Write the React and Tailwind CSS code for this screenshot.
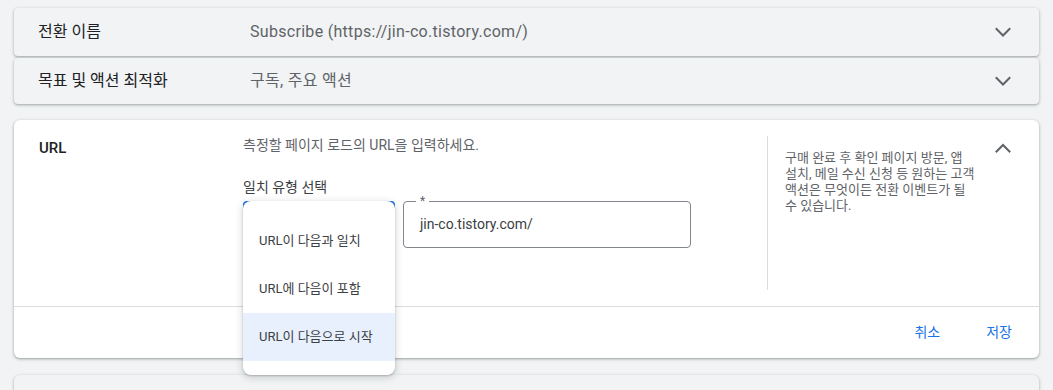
import React from 'react'

const font = { fontFamily: 'Roboto, "Noto Sans CJK KR", sans-serif' }

function Chevron({ up = false }) {
  return (
    <svg width="24" height="24" viewBox="0 0 24 24" fill="none" className="text-[#5f6368]">
      <path
        d={up ? 'M5.5 15.5 12 9l6.5 6.5' : 'M5.5 9 12 15.5 18.5 9'}
        stroke="currentColor"
        strokeWidth="2"
        strokeLinecap="square"
      />
    </svg>
  )
}

function SummaryRow({ label, value, className = '' }) {
  return (
    <div className={`flex items-center bg-[#f1f3f4] rounded-[4px] shadow-[0_1px_2px_rgba(60,64,67,0.3),0_1px_3px_1px_rgba(60,64,67,0.12)] ${className}`}>
      <div className="w-[236px] pl-6 text-[16px] text-[#202124]">{label}</div>
      <div className="flex-1 text-[16px] tracking-[0.3px] text-[#5f6368]">{value}</div>
      <div className="pr-6">
        <Chevron />
      </div>
    </div>
  )
}

const options = ['URL이 다음과 일치', 'URL에 다음이 포함', 'URL이 다음으로 시작']

export default function App() {
  const [selected] = React.useState(2)

  return (
    <div className="h-[390px] overflow-hidden bg-[#f1f3f4] px-[14px] pt-2" style={font}>
      <SummaryRow label="전환 이름" value="Subscribe (https://jin-co.tistory.com/)" className="h-12" />
      <SummaryRow label="목표 및 액션 최적화" value="구독, 주요 액션" className="h-[46px] mt-[2px]" />

      <div className="mt-4 bg-white rounded-[6px] shadow-[0_1px_2px_rgba(60,64,67,0.3),0_1px_3px_1px_rgba(60,64,67,0.15)]">
        <div className="flex h-[186px] py-4">
          <div className="w-[229px] pl-[25px] pt-[3px] text-[15px] font-medium text-[#202124] leading-[18px]">URL</div>

          <div className="flex-1 text-[14px] text-[#5f6368]">
            <p className="leading-[18px]">측정할 페이지 로드의 URL을 입력하세요.</p>
            <p className="mt-[24px] leading-[18px] text-[#3c4043]">일치 유형 선택</p>
            <div className="mt-[5px] flex gap-2">
              <div className="relative">
                <div className="w-[152px] h-[47px] rounded-[4px] border-2 border-[#1a73e8]" />
                <div className="absolute left-0 top-0 z-10 w-[152px] bg-white rounded-[8px] pt-[16px] pb-[14px] shadow-[0_2px_6px_2px_rgba(60,64,67,0.15),0_1px_2px_rgba(60,64,67,0.3)]">
                  {options.map((o, i) => (
                    <div
                      key={o}
                      className={`h-12 flex items-center pl-4 text-[13px] text-[#3c4043] ${i === selected ? 'bg-[#e8f0fe]' : ''}`}
                    >
                      {o}
                    </div>
                  ))}
                </div>
              </div>
              <div className="relative w-[288px] h-[47px] rounded-[4px] border border-[#80868b] flex items-center pl-4">
                <span className="absolute -top-[9px] left-[12px] bg-white px-1 text-[12px] text-[#5f6368] leading-[16px]">*</span>
                <span className="text-[14px] text-[#3c4043]">jin-co.tistory.com/</span>
              </div>
            </div>
          </div>

          <div className="w-px bg-[#dadce0]" />

          <div className="w-[211px] pl-[17px] pt-[14px]">
            <p className="w-[190px] text-[13px] leading-[16px] text-[#5f6368] break-keep">
              구매 완료 후 확인 페이지 방문, 앱 설치, 메일 수신 신청 등 원하는 고객 액션은 무엇이든 전환 이벤트가 될 수 있습니다.
            </p>
          </div>

          <div className="w-[48px] mr-[12px] flex justify-center">
            <Chevron up />
          </div>
        </div>

        <div className="h-[52px] border-t border-[#dadce0] flex items-center justify-end gap-[46px] pr-[27px] text-[14px] text-[#1a73e8]">
          <button>취소</button>
          <button>저장</button>
        </div>
      </div>

      <div className="mt-[17px] h-12 bg-[#f1f3f4] rounded-[6px] shadow-[0_1px_2px_rgba(60,64,67,0.3),0_1px_3px_1px_rgba(60,64,67,0.12)]" />
    </div>
  )
}
